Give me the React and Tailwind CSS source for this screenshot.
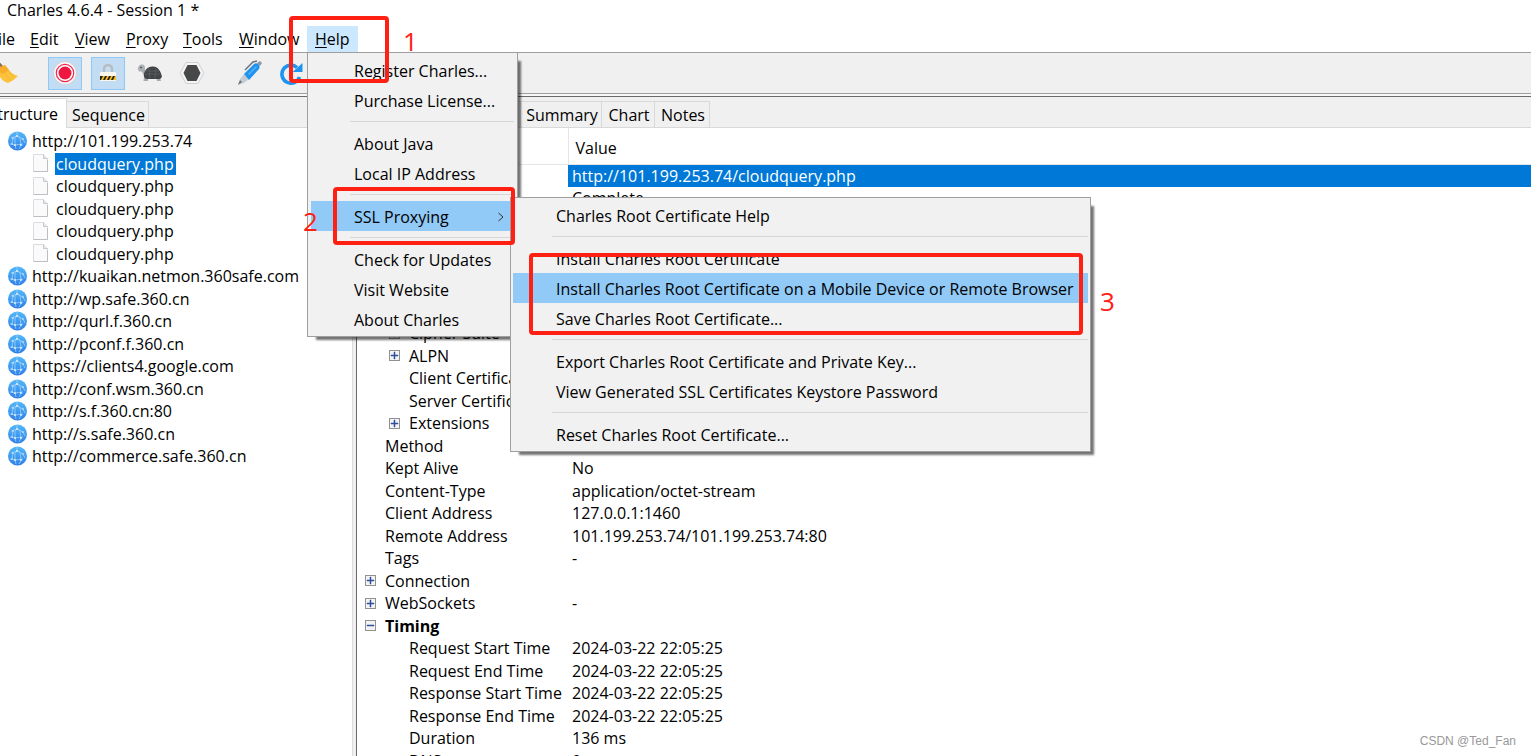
import { useState } from "react";
import clsx from "clsx";

const menus = [
  { name: "Edit", width: "w-[45px]" },
  { name: "View", width: "w-[51px]" },
  { name: "Proxy", width: "w-[57px]" },
  { name: "Tools", width: "w-[56px]" },
  { name: "Window", width: "w-[76px]" },
];

const helpItems = [
  "Register Charles...",
  "Purchase License...",
  null,
  "About Java",
  "Local IP Address",
  null,
  "SSL Proxying",
  null,
  "Check for Updates",
  "Visit Website",
  "About Charles",
];

const sslItems = [
  "Charles Root Certificate Help",
  null,
  "Install Charles Root Certificate",
  "Install Charles Root Certificate on a Mobile Device or Remote Browser",
  "Save Charles Root Certificate...",
  null,
  "Export Charles Root Certificate and Private Key...",
  "View Generated SSL Certificates Keystore Password",
  null,
  "Reset Charles Root Certificate...",
];

const hosts = [
  "http://kuaikan.netmon.360safe.com",
  "http://wp.safe.360.cn",
  "http://qurl.f.360.cn",
  "http://pconf.f.360.cn",
  "https://clients4.google.com",
  "http://conf.wsm.360.cn",
  "http://s.f.360.cn:80",
  "http://s.safe.360.cn",
  "http://commerce.safe.360.cn",
];

const requests = [0, 1, 2, 3, 4];

const details = [
  { name: "URL", value: "http://101.199.253.74/cloudquery.php" },
  { name: "Status", value: "Complete" },
  { name: "Response Code", value: "200 OK" },
  { name: "Protocol", value: "HTTP/1.1" },
  { name: "TLS", value: "-", toggle: "minus" },
  { name: "Protocol", value: "-", nested: true, toggle: "plus" },
  { name: "Session Resumed", value: "-", nested: true, toggle: "plus" },
  { name: "Cipher Suite", value: "-", nested: true, toggle: "plus" },
  { name: "ALPN", value: "-", nested: true, toggle: "plus" },
  { name: "Client Certificates", value: "-", nested: true },
  { name: "Server Certificates", value: "-", nested: true },
  { name: "Extensions", value: "", nested: true, toggle: "plus" },
  { name: "Method", value: "POST" },
  { name: "Kept Alive", value: "No" },
  { name: "Content-Type", value: "application/octet-stream" },
  { name: "Client Address", value: "127.0.0.1:1460" },
  { name: "Remote Address", value: "101.199.253.74/101.199.253.74:80" },
  { name: "Tags", value: "-" },
  { name: "Connection", value: "", toggle: "plus" },
  { name: "WebSockets", value: "-", toggle: "plus" },
  { name: "Timing", value: "", toggle: "minus", bold: true },
  { name: "Request Start Time", value: "2024-03-22 22:05:25", nested: true },
  { name: "Request End Time", value: "2024-03-22 22:05:25", nested: true },
  { name: "Response Start Time", value: "2024-03-22 22:05:25", nested: true },
  { name: "Response End Time", value: "2024-03-22 22:05:25", nested: true },
  { name: "Duration", value: "136 ms", nested: true },
  { name: "DNS", value: "0 ms", nested: true },
];

function Mnemonic({ text }) {
  return (
    <span>
      <span className="underline decoration-1 underline-offset-2">
        {text[0]}
      </span>
      {text.slice(1)}
    </span>
  );
}

function GlobeIcon() {
  return (
    <svg viewBox="0 0 20 20" className="size-5 shrink-0">
      <defs>
        <linearGradient id="globe" x1="0" y1="0" x2="0" y2="1">
          <stop offset="0" stopColor="#55b9f8" />
          <stop offset="1" stopColor="#2f7fe8" />
        </linearGradient>
      </defs>
      <circle cx="9.5" cy="10" r="9.5" fill="url(#globe)" />
      <g fill="none" stroke="#9ad2fb" strokeWidth="0.8">
        <path d="M3 7l6-2 6 3M2 13l5 1 8-1M7 8c0-3 4-4 5-1l1 7M5 7l-1 6M9 1v4M7 8v6l1 4M13 14l-2 4M15 8l2 4" />
      </g>
      <g fill="#e4f4ff">
        <circle cx="5" cy="7" r=".8" />
        <circle cx="9" cy="5" r=".9" />
        <circle cx="15" cy="8" r=".8" />
        <circle cx="4" cy="13" r=".8" />
        <circle cx="7" cy="14" r=".9" />
        <circle cx="13" cy="14" r=".9" />
      </g>
    </svg>
  );
}

function PageIcon() {
  return (
    <svg viewBox="0 0 16 19" className="h-[19px] w-4 shrink-0">
      <path d="M.5.5h10l4 4v13H.5z" fill="#fafafa" stroke="#dcdce0" />
      <path d="M.5 17.500h14V6" fill="none" stroke="#bcbec4" />
      <path d="M10.500.5v4h4" fill="#e9ebee" stroke="#c4c7cd" />
    </svg>
  );
}

function ToggleIcon({ type }) {
  return (
    <svg viewBox="0 0 11 11" className="size-[11px]">
      <rect x=".5" y=".5" width="10" height="10" fill="#f3f3f3" stroke="#919191" />
      <path d="M2 5h7v1H2z" fill="#2f4f9e" stroke="#2f4f9e" strokeWidth=".5" />
      {type === "plus" && (
        <path d="M5 2h1v7H5z" fill="#2f4f9e" stroke="#2f4f9e" strokeWidth=".5" />
      )}
    </svg>
  );
}

function BroomIcon() {
  return (
    <svg viewBox="0 0 18 24" className="h-6 w-[18px]">
      <path d="M-2 1l5 6" stroke="#8d6748" strokeWidth="2.500" />
      <path d="M0 7l5-2 4 4c2 3 5 5 9 6-3 3-6 5-10 7-4-1-6-3-8-6z" fill="#fdc23b" />
      <path d="M0 6l5-2 4 5-6 4-3-2z" fill="#f5ad2a" />
      <path d="M5 12l6 8M9 10l5 7" stroke="#f3b433" strokeWidth=".8" />
    </svg>
  );
}

function RecordIcon() {
  return (
    <svg viewBox="0 0 24 24" className="size-6">
      <circle cx="12" cy="12" r="11.500" fill="#f8f8f8" stroke="#d3d0d6" />
      <circle cx="12" cy="12" r="8.700" fill="#fff" stroke="#f4264f" strokeWidth="1.200" />
      <circle cx="12" cy="12" r="6.500" fill="#ef173f" />
    </svg>
  );
}

function LockIcon() {
  return (
    <svg viewBox="0 0 18 20" className="h-5 w-[18px]">
      <path d="M5 10V6a4 4 0 018 0v4" fill="none" stroke="#b7bcc2" strokeWidth="2.400" />
      <rect x="1" y="9" width="16" height="9" rx="1" fill="#f9f7ee" />
      <rect x="1" y="13" width="16" height="4" fill="#222" />
      <path d="M2 17l2-4h2l-2 4zM6 17l2-4h2l-2 4zM10 17l2-4h2l-2 4zM14 17l2-4h1v4z" fill="#f5bd1f" />
    </svg>
  );
}

function TurtleIcon() {
  return (
    <svg viewBox="0 0 26 20" className="h-5 w-[26px]">
      <path d="M1 6c0-3 2-5 4.500-4.500S8 4 8 7l3 4-2 3C6 13 6 9 4 8.500 2 8.500 1 8 1 6z" fill="#a9b0b4" />
      <path d="M7 14h4v4H6.500zM19 14h4l1 4h-4z" fill="#a5acb1" />
      <path d="M7 14c-1-6 4-11 9-10.500 5 0 8 5 9 10.500l-2 2H9z" fill="#424547" />
      <path d="M8 11h15M12 5l1 10M19 5l-1 10M9 8h13" stroke="#606365" strokeWidth=".7" />
      <circle cx="4" cy="4.500" r=".8" fill="#333" />
    </svg>
  );
}

function HexagonIcon() {
  return (
    <svg viewBox="0 0 26 24" className="h-6 w-[26px]">
      <path d="M7 1.500h12l6 10.500-6 10.500H7L1 12z" fill="#f4f4f4" stroke="#cfcfcf" />
      <path d="M8.500 4h9l4 8-4 8h-9l-4-8z" fill="#46484a" />
    </svg>
  );
}

function PenIcon() {
  return (
    <svg viewBox="0 0 26 26" className="size-[26px]">
      <path d="M1 25l2-6 4-5 5 5-5 4z" fill="#c6ccd3" />
      <path d="M1 25l2-5 2 2z" fill="#6b7078" />
      <path d="M7 14L17 4c3-2 7 1 5 5L12 20z" fill="#1f93ee" />
      <path d="M11 14l8-8 1 1-8 8z" fill="#55b3f9" />
      <path d="M8 10l8-8 4-1" fill="none" stroke="#69727d" strokeWidth="1.400" />
      <path d="M20 3l3-2 2 2-2 3z" fill="#8d98a5" />
    </svg>
  );
}

function RepeatIcon() {
  return (
    <svg viewBox="0 0 24 24" className="size-6">
      <path d="M20.500 16A9 9 0 1118 6.500" fill="none" stroke="#1c94f0" strokeWidth="3.600" />
      <path d="M23.500 2v9h-10z" fill="#1c94f0" />
    </svg>
  );
}

function MenuList({ items, active, onPick, className, children }) {
  return (
    <ul
      role="menu"
      className={clsx(
        "absolute z-10 border border-[#9f9f9f] bg-[#f1f1f1] py-[2px] shadow-[6px_6px_2px_-3px_rgba(0,0,0,0.55)]",
        className
      )}
    >
      {items.map((item, i) =>
        item === null ? (
          <li key={i} role="separator" className="h-[13px] pt-[6px] pl-[39px]">
            <div className="h-px bg-[#d7d7d7]" />
          </li>
        ) : (
          <li key={i} role="none">
            <button
              type="button"
              role="menuitem"
              onClick={() => onPick(item)}
              className={clsx(
                "flex h-[30px] w-full items-center justify-between pt-[2px] pr-[9px] pl-[43px] text-left whitespace-nowrap",
                item === active && "bg-[#91c9f7]"
              )}
            >
              {item}
              {item === "SSL Proxying" && (
                <svg viewBox="0 0 8 10" className="h-[10px] w-2">
                  <path d="M1.500 1L6 5 1.500 9" fill="none" stroke="#333" />
                </svg>
              )}
            </button>
          </li>
        )
      )}
      {children}
    </ul>
  );
}

function MenuBar() {
  const [helpItem, setHelpItem] = useState("SSL Proxying");
  const [sslItem, setSslItem] = useState(sslItems[3]);

  return (
    <nav className="flex h-8 items-start pt-[6px]">
      <button type="button" className="flex h-[26px] w-[22px] items-center justify-end overflow-hidden pr-[7px]">
        <Mnemonic text="File" />
      </button>
      {menus.map((menu) => (
        <button
          key={menu.name}
          type="button"
          className={clsx("h-[26px] pl-2 text-left", menu.width)}
        >
          <Mnemonic text={menu.name} />
        </button>
      ))}
      <div className="relative">
        <button type="button" className="block h-[26px] w-[51px] bg-[#cce8ff] pl-2 text-left">
          <Mnemonic text="Help" />
        </button>
        <MenuList
          items={helpItems}
          active={helpItem}
          onPick={setHelpItem}
          className="top-full left-0 w-[211px] px-[3px]"
        >
          <li role="none">
            <MenuList
              items={sslItems}
              active={sslItem}
              onPick={setSslItem}
              className="top-[144px] left-[202px] w-[581px] px-[2px]"
            />
          </li>
        </MenuList>
      </div>
    </nav>
  );
}

function Toolbar() {
  return (
    <div className="flex h-[42px] items-center border-y border-[#9f9f9f] bg-[#f0f0f0]">
      <button type="button" aria-label="Clear" className="mr-[30px]">
        <BroomIcon />
      </button>
      <button
        type="button"
        aria-label="Record"
        className="mr-[9px] flex h-[33px] w-[34px] items-center justify-center border border-[#90c8f6] bg-[#c2dcf3]"
      >
        <RecordIcon />
      </button>
      <button
        type="button"
        aria-label="SSL Proxying"
        className="mr-3 flex h-[33px] w-[34px] items-center justify-center border border-[#90c8f6] bg-[#c2dcf3]"
      >
        <LockIcon />
      </button>
      <button type="button" aria-label="Throttling" className="mr-4">
        <TurtleIcon />
      </button>
      <button type="button" aria-label="Breakpoints" className="mr-8">
        <HexagonIcon />
      </button>
      <button type="button" aria-label="Compose" className="mr-4">
        <PenIcon />
      </button>
      <button type="button" aria-label="Repeat">
        <RepeatIcon />
      </button>
    </div>
  );
}

function Tab({ active, className, children }) {
  return (
    <button
      type="button"
      className={clsx(
        "border-t border-r border-[#d9d9d9] text-center whitespace-nowrap",
        active ? "h-[30px] bg-white" : "h-[27px] border-b pl-[2px]",
        className
      )}
    >
      {children}
    </button>
  );
}

function Sidebar() {
  return (
    <aside className="flex w-[352px] shrink-0 flex-col">
      <div className="flex h-[31px] items-end bg-[#f0f0f0] shadow-[inset_0_-1px_#d9d9d9]">
        <Tab active className="flex w-[67px] items-center justify-end overflow-hidden pr-2">
          Structure
        </Tab>
        <Tab className="w-[82px]">Sequence</Tab>
      </div>
      <ul className="pt-[2px] pl-2">
        <li className="flex items-center gap-1 odd:h-[22px] even:h-[23px]">
          <GlobeIcon />
          http://101.199.253.74
        </li>
        {requests.map((row) => (
          <li key={row} className="flex items-center gap-[6px] pl-[25px] odd:h-[22px] even:h-[23px]">
            <PageIcon />
            <span className={clsx("px-px", row === 0 && "bg-[#0078d7] pr-[2px] text-white")}>
              cloudquery.php
            </span>
          </li>
        ))}
        {hosts.map((host) => (
          <li key={host} className="flex items-center gap-1 odd:h-[22px] even:h-[23px]">
            <GlobeIcon />
            {host}
          </li>
        ))}
      </ul>
    </aside>
  );
}

function Details() {
  return (
    <main className="min-w-0 flex-1 border-l border-[#696969]">
      <div className="flex h-[31px] items-end bg-[#f0f0f0] shadow-[inset_0_-1px_#d9d9d9]">
        <Tab active className="w-[83px]">Overview</Tab>
        <Tab className="w-[81px]">Contents</Tab>
        <Tab className="w-[81px]">Summary</Tab>
        <Tab className="w-[53px]">Chart</Tab>
        <Tab className="w-[55px]">Notes</Tab>
      </div>
      <table className="w-full table-fixed border-collapse">
        <thead>
          <tr className="h-9 border-b border-[#e5e5e5] text-left">
            <th className="w-[211px] border-r border-[#e5e5e5] p-0 pl-2 font-normal">Name</th>
            <th className="p-0 pt-1 pl-[7px] font-normal">Value</th>
          </tr>
        </thead>
        <tbody>
          {details.map((row, i) => (
            <tr key={i} className="odd:h-[23px] even:h-[22px]">
              <td className="p-0">
                <div className={clsx("flex items-center", row.nested ? "pl-8" : "pl-2")}>
                  <span className="flex w-5 shrink-0 items-center">
                    {row.toggle && <ToggleIcon type={row.toggle} />}
                  </span>
                  <span className={clsx("whitespace-nowrap", row.bold && "font-bold")}>
                    {row.name}
                  </span>
                </div>
              </td>
              <td className={clsx("p-0 pl-1", i === 0 && "bg-[#0078d7] text-white")}>
                {row.value}
              </td>
            </tr>
          ))}
        </tbody>
      </table>
    </main>
  );
}

export default function App() {
  return (
    <div className="relative flex h-screen flex-col overflow-hidden bg-white font-['Open_Sans','Noto_Sans',sans-serif] text-[16px] leading-[22px] text-black">
      <header className="h-5 shrink-0 pl-[7px] leading-5">Charles 4.6.4 - Session 1 *</header>
      <div className="shrink-0">
        <MenuBar />
      </div>
      <div className="shrink-0">
        <Toolbar />
        <div className="h-[3px] border-b border-[#696969] bg-[#f7f7f7]" />
      </div>
      <div className="flex min-h-0 flex-1">
        <Sidebar />
        <div className="w-1 shrink-0 border-l border-[#dcdcdc] bg-[#f0f0f0]" />
        <Details />
      </div>

      {/* step markers */}
      <div className="absolute top-4 left-[289px] z-20 h-[67px] w-[100px] rounded border-4 border-[#ff2014]" />
      <div className="absolute top-[187px] left-[333px] z-20 h-[58px] w-[182px] rounded border-4 border-[#ff2014]" />
      <div className="absolute top-[253px] left-[529px] z-20 h-[82px] w-[554px] rounded border-4 border-[#ff2014]" />
      <span className="absolute top-[29px] left-[403px] z-20 text-[26px] leading-6 text-[#ff2014]">1</span>
      <span className="absolute top-[209px] left-[303px] z-20 text-[26px] leading-6 text-[#ff2014]">2</span>
      <span className="absolute top-[289px] left-[1100px] z-20 text-[26px] leading-6 text-[#ff2014]">3</span>

      <footer className="absolute right-[15px] bottom-[7px] font-['Liberation_Sans',sans-serif] text-xs leading-4 text-[#999]">
        CSDN @Ted_Fan
      </footer>
    </div>
  );
}
